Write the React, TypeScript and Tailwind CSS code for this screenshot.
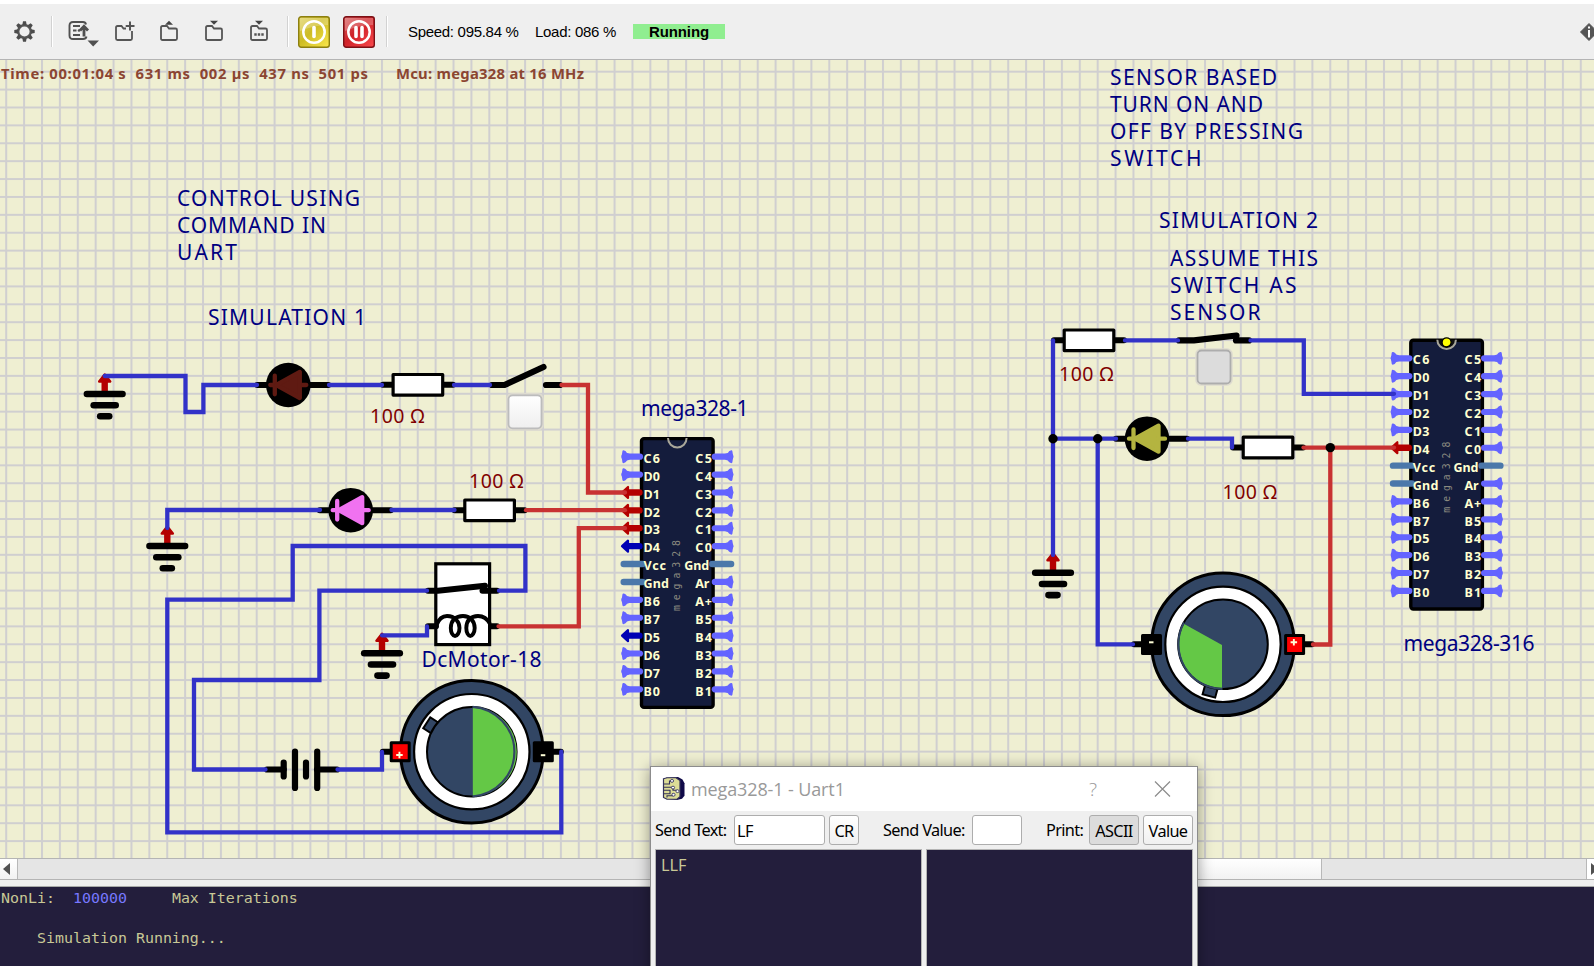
import React from "react";

const BLUE = "#3232c8";
const RED = "#c83232";
const UI = "'Noto Sans', 'DejaVu Sans', sans-serif";

type TProps = { x: number; y: number; w: number; size?: number; fill?: string; children: string };

function Label({ x, y, w, size = 21, fill = "#000080", children }: TProps) {
  return (
    <text x={x} y={y} fontSize={size} fill={fill} textLength={w} lengthAdjust="spacing" fontFamily={UI}>
      {children}
    </text>
  );
}

function Ohms({ x, y }: { x: number; y: number }) {
  return (
    <Label x={x} y={y} w={54.500} size={19.500} fill="#800000">
      100 Ω
    </Label>
  );
}

function Wire({ d, c = BLUE }: { d: string; c?: string }) {
  return <path d={d} stroke={c} strokeWidth={4.3} fill="none" strokeLinecap="round" strokeLinejoin="miter" />;
}

function Ground({ x, y }: { x: number; y: number }) {
  return (
    <g transform={`translate(${x} ${y})`}>
      <path d="M0 16V4" stroke="#b40000" strokeWidth={6.4} />
      <path d="M-5.500 5.500L0 -1.500L5.500 5.500Z" fill="#b40000" stroke="#b40000" strokeWidth={2.5} strokeLinejoin="round" />
      <g stroke="#000" strokeWidth={6.6} strokeLinecap="round">
        <path d="M-17.800 18H17.800" />
        <path d="M-11 29.200H11" />
        <path d="M-4.500 40.300H4.500" />
      </g>
    </g>
  );
}

function Led({ x, y, c }: { x: number; y: number; c: string }) {
  return (
    <g transform={`translate(${x} ${y})`}>
      <path d="M-31 0H40" stroke="#000" strokeWidth={6} strokeLinecap="round" />
      <circle r={22.3} fill="#000" />
      <g stroke={c} fill={c} strokeWidth={4.3} strokeLinecap="round" strokeLinejoin="round">
        <path d="M-18 0H18M-13.500 -9.300V9.300" />
        <path d="M-12 0L11.500 -13V13Z" />
      </g>
    </g>
  );
}

function Resistor({ x, y }: { x: number; y: number }) {
  return (
    <g transform={`translate(${x} ${y})`}>
      <path d="M-35 0H35" stroke="#000" strokeWidth={6} strokeLinecap="round" />
      <rect x={-24.8} y={-10.300} width={49.600} height={20.600} fill="#fff" stroke="#000" strokeWidth={3.200} strokeLinejoin="round" />
    </g>
  );
}

function Key({ x, y, pressed }: { x: number; y: number; pressed?: boolean }) {
  return (
    <g>
      <rect x={x - 0.5} y={y - 0.5} width={36} height={36} rx={5} fill="none" stroke="#dedbd0" strokeWidth={1.500} />
      <rect x={x + 1} y={y + 1} width={33} height={33} rx={4} fill={pressed ? "#dcdcdc" : "url(#key)"} stroke={pressed ? "#adadad" : "#bcbcbc"} strokeWidth={1.800} />
    </g>
  );
}

const LEFT = ["C6", "D0", "D1", "D2", "D3", "D4", "Vcc", "Gnd", "B6", "B7", "D5", "D6", "D7", "B0"];
const RIGHT = ["C5", "C4", "C3", "C2", "C1", "C0", "Gnd", "Ar", "A+", "B5", "B4", "B3", "B2", "B1"];

function Pin({ x, y, kind, flip }: { x: number; y: number; kind: string; flip?: boolean }) {
  const t = `translate(${x} ${y})${flip ? " scale(-1 1)" : ""}`;
  if (kind === "power") {
    return <path transform={t} d="M3.200 0H22" stroke="#4b78aa" strokeWidth={6.400} strokeLinecap="round" />;
  }
  if (kind === "in") {
    return (
      <g transform={t} fill="#6464ff" stroke="#6464ff">
        <path d="M4 0H19.500" strokeWidth={6.200} strokeLinecap="round" />
        <path d="M3 -5.300L4.500 -4.600Q5.500 -2.500 8 -2.200V2.200Q5.500 2.500 4.500 4.600L3 5.300L2.200 0Z" strokeWidth={2.200} strokeLinejoin="round" />
      </g>
    );
  }
  const c = kind === "red" ? "#b40000" : "#0000b4";
  return (
    <g transform={t} fill={c} stroke={c}>
      <path d="M8 0H19" strokeWidth={6.400} strokeLinecap="round" />
      <path d="M1.500 0L7.500 -5.500V5.500Z" strokeWidth={2.200} strokeLinejoin="round" />
    </g>
  );
}

function Chip({ x, y, out, dot }: { x: number; y: number; out: Record<string, string>; dot?: boolean }) {
  const isPower = (n: string) => n === "Vcc" || n === "Gnd";
  return (
    <g transform={`translate(${x} ${y})`}>
      <rect x={1.500} y={1.500} width={71.600} height={268.800} rx={2.500} fill="#141c3c" stroke="#000" strokeWidth={3.400} />
      <path d="M28 1A9.300 9.300 0 0 0 46.600 1" fill={dot ? "#101010" : "none"} stroke="#a9a79a" strokeWidth={2} />
      {dot && <circle cx={37.300} cy={3.600} r={4.500} fill="#ffff00" stroke="#000" strokeWidth={1.200} />}
      {LEFT.map((n, i) => {
        const py = 19.600 + i * 17.893;
        return (
          <g key={"l" + i}>
            <Pin x={-19.500} y={py} kind={isPower(n) ? "power" : out[n] || "in"} />
            <text x={3.500} y={py + 6.200} fontSize={12.500} fontWeight={700} fill="#ffffd0" fontFamily="'Noto Sans', 'Open Sans', sans-serif" textLength={n.length === 3 ? (n === "Vcc" ? 22.500 : 25.500) : 16.500}>
              {n}
            </text>
          </g>
        );
      })}
      {RIGHT.map((n, i) => {
        const py = 19.600 + i * 17.893;
        return (
          <g key={"r" + i}>
            <Pin x={94.300} y={py} kind={isPower(n) ? "power" : "in"} flip />
            <text x={n.length === 3 ? 44.200 : 55.300} y={py + 6.200} fontSize={12.500} fontWeight={700} fill="#ffffd0" fontFamily="'Noto Sans', 'Open Sans', sans-serif" textLength={n.length === 3 ? 25 : n === "Ar" ? 14 : 16.500}>
              {n}
            </text>
          </g>
        );
      })}
      <text transform="translate(40.300 174) rotate(-90)" fontSize={9.800} fill="#8c8b80" fontFamily="'DejaVu Sans Mono', monospace" textLength={71}>
        mega328
      </text>
    </g>
  );
}

function Terminal({ x, y, plus, ty }: { x: number; y: number; plus?: boolean; ty: number }) {
  return (
    <g>
      <rect x={x - 10.500} y={y - 10.500} width={21} height={21} rx={1.500} fill="#000" />
      {plus && <rect x={x - 7.500} y={y - 7.500} width={15} height={15} fill="#ff0000" />}
      {plus ? (
        <path d={`M${x - 4} ${y + ty}h6.500M${x - 0.750} ${y + ty - 3.200}v6.500`} stroke="#ffffd8" strokeWidth={1.900} />
      ) : (
        <path d={`M${x - 2.500} ${y + ty}h4.500`} stroke="#ffffd8" strokeWidth={2} />
      )}
    </g>
  );
}

function Motor({ x, y, sector, angle }: { x: number; y: number; sector: string; angle: number }) {
  return (
    <g transform={`translate(${x} ${y})`}>
      <path d="M-89 0H89" stroke="#000" strokeWidth={6} strokeLinecap="round" />
      <circle r={71.300} fill="#324664" stroke="#000" strokeWidth={3} />
      <circle r={57.700} fill="#fff" stroke="#000" strokeWidth={2.200} />
      <g transform={`rotate(${angle})`}>
        <rect x={44} y={-6.500} width={9.500} height={13} fill="#324664" stroke="#000" strokeWidth={2} />
      </g>
      <circle r={44.800} fill="#324664" stroke="#000" strokeWidth={2} />
      <path d={sector} fill="#64c846" stroke="none" />
    </g>
  );
}

function Schematic() {
  return (
    <svg className="block shrink-0" width={1594} height={798} viewBox="0 60 1594 798">
      <defs>
        <pattern id="grid" x={5.200} y={70.700} width={17.893} height={17.893} patternUnits="userSpaceOnUse">
          <rect width={17.893} height={17.893} fill="#efefd2" />
          <path d="M1 0V17.893M0 1H17.893" stroke="#d0cfd0" strokeWidth={2} />
        </pattern>
        <linearGradient id="key" x1="0" y1="0" x2="0" y2="1">
          <stop offset="0" stopColor="#ffffff" />
          <stop offset="1" stopColor="#efefef" />
        </linearGradient>
      </defs>
      <rect y={60} width={1594} height={798} fill="url(#grid)" />

      <g fontWeight={700}>
        <Label x={1} y={78.700} w={367} size={14.800} fill="#8b4532">
          {"Time: 00:01:04 s\u00a0 631 ms\u00a0 002 µs\u00a0 437 ns\u00a0 501 ps"}
        </Label>
        <Label x={396} y={78.700} w={188} size={14.800} fill="#8b4532">
          Mcu: mega328 at 16 MHz
        </Label>
      </g>

      <Label x={177} y={205.800} w={183}>CONTROL USING</Label>
      <Label x={177} y={232.800} w={149}>COMMAND IN</Label>
      <Label x={177} y={259.800} w={60}>UART</Label>
      <Label x={208} y={324.900} w={158}>SIMULATION 1</Label>
      <Label x={1110} y={84.800} w={167}>SENSOR BASED</Label>
      <Label x={1110} y={111.800} w={153}>TURN ON AND</Label>
      <Label x={1110} y={138.800} w={193}>OFF BY PRESSING</Label>
      <Label x={1110} y={165.800} w={91.500}>SWITCH</Label>
      <Label x={1159} y={227.900} w={159}>SIMULATION 2</Label>
      <Label x={1170} y={265.900} w={148}>ASSUME THIS</Label>
      <Label x={1170} y={292.800} w={126.500}>SWITCH AS</Label>
      <Label x={1170} y={319.800} w={90.500}>SENSOR</Label>
      <Label x={641} y={416} w={107.500}>mega328-1</Label>
      <Label x={1403.500} y={650.800} w={131}>mega328-316</Label>
      <Label x={421.500} y={666.800} w={120}>DcMotor-18</Label>
      <Ohms x={370} y={422.700} />
      <Ohms x={469} y={487.700} />
      <Ohms x={1059} y={380.500} />
      <Ohms x={1222.500} y={499} />

      <Chip x={640} y={437.100} out={{ D1: "red", D2: "red", D3: "red", D4: "blue", D5: "blue" }} />
      <Chip x={1409.300} y={338.700} out={{ D4: "red" }} dot />

      <Ground x={104.700} y={376} />
      <Ground x={167.300} y={528} />
      <Ground x={382} y={635.300} />
      <Ground x={1053} y={554.800} />

      <Led x={288.300} y={385} c="#5f1a12" />
      <Led x={350.700} y={510.200} c="#f072f0" />
      <Led x={1147} y={438.700} c="#b4b440" />

      <Resistor x={417.900} y={384.800} />
      <Resistor x={489.600} y={510.300} />
      <Resistor x={1089} y={340.300} />
      <Resistor x={1268} y={447.500} />

      <g stroke="#000" strokeWidth={6.200} strokeLinecap="round" fill="none">
        <path d="M492 385H504.500L543.500 367" />
        <path d="M546 385H560" />
        <path d="M1179 340.400H1194L1236.500 335.500" />
        <path d="M1236 340.400H1249" />
      </g>
      <Key x={507.500} y={394.300} />
      <Key x={1196.500} y={349.500} pressed />

      <rect x={435.800} y={563.800} width={53.800} height={80.800} fill="#fff" stroke="#000" strokeWidth={3.200} />
      <g stroke="#000" strokeWidth={6} strokeLinecap="round" fill="none">
        <path d="M428 590.700H438L485 585.700" />
        <path d="M482.500 590.700H497" />
        <path d="M428 626.300H436M491 626.300H497" />
      </g>
      <path
        d="M436.500 625Q440 616 447 616C455 616 459.500 622 459.500 628C459.500 633 457 636 455 636C453 636 450.800 633 450.800 628C451 620 456 616 463 616C470 616 474.700 621 474.700 628C474.700 633 472 636 470.300 636C468.500 636 466.300 633 466.300 628C466.500 620 471 616 478 616Q486 616 490 624"
        stroke="#000"
        strokeWidth={3.900}
        fill="none"
      />

      <g stroke="#000" strokeWidth={6.200} strokeLinecap="round">
        <path d="M267 769.500H283.700M317 769.500H337" />
        <path d="M283.700 762.500V776.500M306 762.500V776.500M295 751.500V788M317.200 751.500V788" />
      </g>

      <Motor x={471.800} y={751.700} angle={212.700} sector="M1 -44A44 44 0 0 1 1 44Z" />
      <path d="M472.500 706.900A44.900 44.900 0 0 1 472.500 796.500" fill="none" stroke="#324664" strokeWidth={2.200} />
      <Motor x={1223} y={644.300} angle={105.300} sector="M-1 0.600L-38.800 -20.300A43.500 43.500 0 0 0 -1 43.500Z" />
      <path d="M1184 622.500A44.800 44.800 0 0 0 1222.500 689" fill="none" stroke="#324664" strokeWidth={2} />
      <Terminal x={400.200} y={751.700} plus ty={3.300} />
      <Terminal x={543.300} y={751.700} ty={3.500} />
      <Terminal x={1151.500} y={644.500} ty={-2.200} />
      <Terminal x={1294.600} y={644.500} plus ty={-2.300} />

      <Wire d="M104.700 376H185.500V412H203.400V385H257" />
      <Wire d="M329 385H382M454 385H490" />
      <Wire c={RED} d="M561.500 385H588V492.500H625" />
      <Wire d="M167.300 528V510H320" />
      <Wire d="M391.500 510H454.500" />
      <Wire c={RED} d="M526 510.200H625" />
      <Wire c={RED} d="M625 528.200H578.800V626.300H498.500" />
      <Wire d="M499 590.700H525.400V546H292.700V599.700H167.300V832.300H561.300V751.700" />
      <Wire d="M427 590.700H319.400V680H194V769.500H265.500" />
      <Wire d="M382 635.300H427V626.500" />
      <Wire d="M337.500 769.500H382V752" />

      <Wire d="M1053 340.300V555" />
      <Wire d="M1053 438.700H1116" />
      <Wire d="M1097.700 438.700V644.300H1133" />
      <Wire d="M1125 340.400H1178M1250.500 340.400H1303.800V393.800H1394" />
      <Wire d="M1188 438.700H1232V447.500" />
      <Wire c={RED} d="M1303.500 447.600H1394" />
      <Wire c={RED} d="M1330.300 447.600V644.500H1313" />
      <circle cx={1053} cy={438.700} r={4.700} />
      <circle cx={1097.700} cy={438.700} r={4.700} />
      <circle cx={1330.300} cy={447.600} r={4.700} />
    </svg>
  );
}

function Sep() {
  return <div className="h-[31px] w-[2px] shrink-0 border-l border-[#d2d2d2] bg-white" />;
}

function Folder({ kind }: { kind: string }) {
  return (
    <svg width={22} height={24} viewBox="0 0 22 24" className="shrink-0" fill="none" stroke="#555" strokeWidth={1.800}>
      <path d={kind === "new" ? "M12 8.500H9.500L7.500 6H3.500Q2 6 2 7.500V18.500Q2 20 3.500 20H16.500Q18 20 18 18.500V11" : "M3.500 6H8L10 8.500H16.500Q18 8.500 18 10V18.500Q18 20 16.500 20H3.500Q2 20 2 18.500V7.500Q2 6 3.500 6Z"} />
      {kind === "new" && <path d="M16 1.500V10.500M11.700 6H20.500" strokeWidth={2} />}
      {kind === "up" && <path d="M6 4.700L10 0.700L14 4.700Z" fill="#444" stroke="none" />}
      {(kind === "down" || kind === "save") && <path d="M6 0.700L10 4.700L14 0.700Z" fill="#444" stroke="none" />}
      {kind === "save" && <path d="M5.300 14.500h2.400M8.800 14.500h2.400M12.300 14.500h2.400" strokeWidth={2.400} />}
    </svg>
  );
}

function Power({ kind }: { kind: "on" | "pause" }) {
  const on = kind === "on";
  return (
    <svg width={32} height={32} viewBox="0 0 32 32" className="shrink-0">
      <defs>
        <linearGradient id={kind} x1="0" y1="0" x2="1" y2="1">
          <stop offset="0" stopColor={on ? "#e0d05a" : "#d86060"} />
          <stop offset="0.45" stopColor={on ? "#cdbc24" : "#cf2228"} />
          <stop offset="1" stopColor={on ? "#fbe84c" : "#fb4a4e"} />
        </linearGradient>
      </defs>
      <rect x={0.700} y={0.700} width={30.600} height={30.600} rx={2.500} fill={`url(#${kind})`} stroke={on ? "#8c7f10" : "#7c1015"} strokeWidth={1.400} />
      <path d="M2 2H30V9Q16 9 2 15Z" fill="#fff" opacity={0.250} />
      <circle cx={16} cy={16} r={10.700} fill="none" stroke="#fff" strokeWidth={2.500} />
      <path d={on ? "M16 11.500V20.500" : "M13 11.500V20.500M19 11.500V20.500"} stroke="#fff" strokeWidth={3.600} strokeLinecap="round" />
    </svg>
  );
}

function Toolbar() {
  return (
    <header className="flex h-[60px] shrink-0 items-center border-t-4 border-b border-t-white border-b-[#b4b4b4] bg-[#efefef] pl-[14px]">
      <svg width={21} height={21} viewBox="-10.500 -10.500 21 21" className="shrink-0">
        <circle r={6.300} fill="none" stroke="#555" strokeWidth={2.400} />
        {[0, 45, 90, 135, 180, 225, 270, 315].map((a) => (
          <path key={a} d="M-2.200 -6.500L-1.500 -10.200H1.500L2.200 -6.500Z" fill="#4c4c4c" transform={`rotate(${a})`} />
        ))}
      </svg>
      <div className="ml-4"><Sep /></div>
      <svg width={32} height={28} viewBox="0 0 32 28" className="mt-[3px] ml-[14px] shrink-0" fill="none" stroke="#505050">
        <path d="M19 5.500Q18.500 3 16 3H6Q2.500 3 2.500 6.500V16.500Q2.500 20 6 20H16Q19 20 19.500 17.500" strokeWidth={1.900} />
        <path d="M6 7H13M6 11.500H9.500M6 16H13" strokeWidth={2.200} />
        <circle cx={12} cy={11.500} r={1.300} fill="#505050" stroke="none" />
        <path d="M17 17.500V8M13 11.500L17 7.200L21 11.500" strokeWidth={2.800} />
        <path d="M20.500 21.500H32L26.200 27.500Z" fill="#505050" stroke="none" />
      </svg>
      <div className="ml-[15px] flex gap-[23px]">
        <Folder kind="new" />
        <Folder kind="up" />
        <Folder kind="down" />
        <Folder kind="save" />
      </div>
      <div className="ml-[16px]"><Sep /></div>
      <div className="ml-[9px] flex gap-[13px]">
        <Power kind="on" />
        <Power kind="pause" />
      </div>
      <div className="ml-[11px]"><Sep /></div>
      <div className="ml-5 flex items-center text-[15px] leading-[15px] whitespace-nowrap text-black" style={{ fontFamily: "'Liberation Sans', Arial, sans-serif" }}>
        <span className="w-[127px] tracking-[-0.3px]">Speed: 095.84 %</span>
        <span className="w-[98px] tracking-[-0.3px]">Load: 086 %</span>
        <span className="h-[15px] w-[92px] bg-[#90ee90] text-center font-bold tracking-[-0.1px]">Running</span>
      </div>
      <svg width={18} height={18} viewBox="0 0 18 18" className="ml-auto -mr-[4px] shrink-0">
        <path d="M9 0.500L17.500 9L9 17.500L0.500 9Z" fill="#555" stroke="#555" strokeLinejoin="round" />
        <path d="M9 3.500V5.500M9 7V14.500" stroke="#fff" strokeWidth={2} />
      </svg>
    </header>
  );
}

function ScrollBar() {
  return (
    <div className="flex h-[22px] shrink-0 border-y border-[#b4b4b4] bg-[#e5e5e5]">
      <div className="flex w-[18px] items-center border-r border-[#b8b8b8] bg-linear-to-b from-white to-[#f2f2f2] pl-[3px]">
        <svg width={7} height={12} viewBox="0 0 7 12"><path d="M7 0V12L0 6Z" fill="#505050" /></svg>
      </div>
      <div className="ml-[882px] w-[422px] border-x border-[#b8b8b8] bg-linear-to-b from-white to-[#f2f2f2]" />
      <div className="ml-auto flex w-[8px] items-center overflow-hidden border-l border-[#b8b8b8] bg-white pl-[4px]">
        <svg width={7} height={12} viewBox="0 0 7 12" className="shrink-0"><path d="M0 0V12L7 6Z" fill="#505050" /></svg>
      </div>
    </div>
  );
}

function Console() {
  return (
    <div className="mt-[6px] flex-1 border-t border-[#a8aaa8] bg-[#231e3c] pt-px pl-px text-[14.95px] leading-[20.1px] whitespace-pre text-[#c8c896]" style={{ fontFamily: "'DejaVu Sans Mono', monospace" }}>
      <div>NonLi:  <span className="text-[#7878ff]">100000</span>     Max Iterations</div>
      <div> </div>
      <div>    Simulation Running...</div>
    </div>
  );
}

function UartWindow() {
  const btn = "flex h-[30px] items-center justify-center rounded-[3px] border border-[#adadad] pt-[2px]";
  return (
    <div className="absolute top-[766px] left-[650px] flex h-[220px] w-[548px] flex-col border border-[#8c8c8c] bg-[#efefef] shadow-[0_2px_14px_rgba(0,0,0,0.4)]">
      <div className="flex h-[44px] shrink-0 items-center bg-white pl-[11px] text-[#999]" style={{ fontFamily: "'Open Sans', 'Noto Sans', sans-serif" }}>
        <svg width={24} height={25} viewBox="0 0 24 28" preserveAspectRatio="none" className="-mt-[2px]">
          <path d="M4 2L16 1L20.500 4L22.500 8V22L20 25.500L15 27L5 25.500Z" fill="#100a48" />
          <path d="M1.500 3L5 2H14L18 5V23L15 26H5L1.500 24Z" fill="#dcdc96" stroke="#33305a" strokeWidth={1.200} />
          <path d="M2 9H7.500V5.500H9M2 12.500H11M2 16H8V20H2M11 12.500V16H16M5 24V22H11V19" fill="none" stroke="#33305a" strokeWidth={1.100} />
          <g fill="#fff" stroke="#33305a" strokeWidth={0.900}>
            <circle cx={10} cy={5.500} r={1.600} />
            <circle cx={11} cy={13} r={1.600} />
            <circle cx={15.500} cy={17} r={1.600} />
            <circle cx={11.500} cy={21} r={1.600} />
          </g>
        </svg>
        <span className="ml-[5px] text-[18px] leading-[24px] tracking-[-0.12px] whitespace-nowrap">mega328-1 - Uart1</span>
        <span className="ml-auto text-[19px] font-light">?</span>
        <svg width={17} height={16} viewBox="0 0 17 16" className="mr-[26px] ml-[57px]" stroke="#8c8c8c" strokeWidth={1.200}>
          <path d="M1 0.500L16 15.500M16 0.500L1 15.500" />
        </svg>
      </div>
      <div className="flex h-[38px] shrink-0 items-center pl-1 text-[16.3px] leading-[20px] whitespace-nowrap text-black" style={{ fontFamily: UI }}>
        <span className="w-[79px] tracking-[-0.65px]">Send Text:</span>
        <div className="flex h-[30px] w-[91px] items-center rounded-[3px] border border-[#adadad] bg-white pt-[2px] pl-[2px] tracking-[-0.65px]">LF</div>
        <div className={btn + " ml-1 w-[30px] bg-linear-to-b from-white to-[#f0f0f0] tracking-[-0.65px]"}>CR</div>
        <span className="ml-6 w-[89px] tracking-[-0.65px]">Send Value:</span>
        <div className="h-[30px] w-[50px] rounded-[3px] border border-[#adadad] bg-white" />
        <span className="ml-6 w-[43px] tracking-[-0.65px]">Print:</span>
        <div className={btn + " w-[50px] bg-[#dcdcdc] tracking-[-0.65px]"}>ASCII</div>
        <div className={btn + " ml-1 w-[50px] bg-linear-to-b from-white to-[#f0f0f0] tracking-[-0.65px]"}>Value</div>
      </div>
      <div className="grid flex-1 grid-cols-2 gap-1 px-1">
        <div className="border border-[#b4b4b4] bg-[#231e3c] pt-[5px] pl-[5px] text-[16.3px] leading-[21px] text-[#c8c896]" style={{ fontFamily: UI }}>LLF</div>
        <div className="border border-[#b4b4b4] bg-[#231e3c]" />
      </div>
    </div>
  );
}

export default function App() {
  return (
    <div className="relative flex h-[966px] w-[1594px] flex-col overflow-hidden bg-[#efefef]">
      <Toolbar />
      <Schematic />
      <ScrollBar />
      <Console />
      <UartWindow />
    </div>
  );
}
